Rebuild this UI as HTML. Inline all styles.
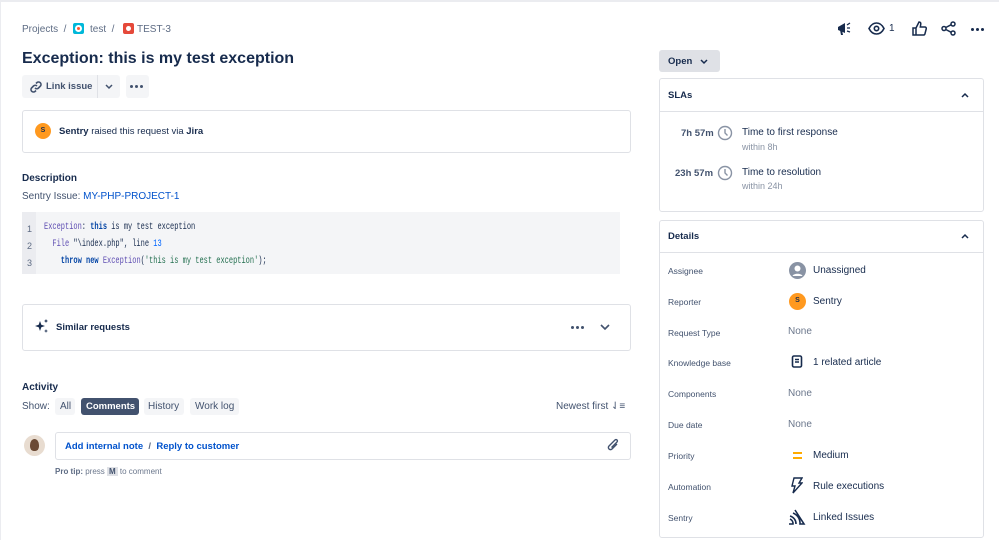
<!DOCTYPE html>
<html><head><meta charset="utf-8"><style>
*{box-sizing:border-box;margin:0;padding:0}
body{width:999px;height:540px;overflow:hidden;background:#fff;font-family:"Liberation Sans",sans-serif;color:#172b4d;position:relative}
.a{position:absolute;white-space:nowrap}
.s11{font-size:10px}.s10{font-size:9px}
.gray{color:#5e6c84}
.box{position:absolute;border:1px solid #dfe1e6;border-radius:3px;background:#fff}
.btn{position:absolute;background:#f4f5f7;border-radius:3px}
.blue{color:#0052cc}
.mono{font-family:"Liberation Mono",monospace;font-size:10px;transform:scaleX(0.70);transform-origin:0 0}
.lbl{position:absolute;left:668px;font-size:8.5px;color:#42526e}
.val{position:absolute;left:813px;font-size:10px;color:#172b4d}
.none{position:absolute;left:788px;font-size:10px;color:#6b778c}
.av{position:absolute;width:16px;height:16px;border-radius:50%;background:#ff991f;color:#172b4d;font-size:7px;text-align:center;line-height:16px;font-weight:bold}
.dots{position:absolute;display:flex;gap:2px}
.dots i{display:block;width:3px;height:3px;border-radius:50%;background:#42526e}
b{font-weight:bold}
</style></head><body>
<div class="a" style="left:0;top:0;width:999px;height:2px;background:#ebecf0"></div>
<div class="a" style="left:0;top:0;width:1px;height:540px;background:#ebecf0"></div>
<!-- breadcrumb -->
<div class="a s11 gray" style="left:22px;top:24px">Projects &nbsp;/</div>
<div class="a" style="left:73px;top:23px;width:11px;height:11px;background:#00b8d9;border-radius:2px"><div style="margin:2px;width:7px;height:7px;border:2px solid #fff;border-radius:50%;background:#ff5630"></div></div>
<div class="a s11 gray" style="left:90px;top:24px">test &nbsp;/</div>
<div class="a" style="left:123px;top:23px;width:11px;height:11px;background:#e5493a;border-radius:2px"><div style="margin:3px;width:5px;height:5px;background:#fff;border-radius:50%"></div></div>
<div class="a s11 gray" style="left:137px;top:24px">TEST-3</div>
<div class="a" style="left:22px;top:50px;font-size:16px;font-weight:bold">Exception: this is my test exception</div>
<!-- buttons -->
<div class="btn" style="left:22px;top:75px;width:98px;height:23px"></div>
<div class="a" style="left:97px;top:75px;width:1px;height:23px;background:#dfe1e6"></div>
<svg class="a" style="left:29px;top:80px" width="14" height="14" viewBox="0 0 14 14" fill="none" stroke="#42526e" stroke-width="1.6"><path d="M6 8a2.5 2.5 0 0 0 3.5 0l2-2a2.5 2.5 0 0 0-3.5-3.5L7 3.5M8 6a2.5 2.5 0 0 0-3.5 0l-2 2A2.5 2.5 0 0 0 6 11.5L7 10.5"/></svg>
<div class="a" style="left:46px;top:81px;font-size:9.5px;color:#42526e;font-weight:bold">Link issue</div>
<svg class="a" style="left:105px;top:84px" width="8" height="6"><path d="M1 1l3 3 3-3" stroke="#42526e" stroke-width="1.5" fill="none"/></svg>
<div class="btn" style="left:126px;top:75px;width:23px;height:23px"></div>
<div class="dots" style="left:130px;top:85px"><i></i><i></i><i></i></div>
<!-- sentry box -->
<div class="box" style="left:22px;top:110px;width:609px;height:43px"></div>
<div class="av" style="left:35px;top:123px">S</div>
<div class="a" style="left:59px;top:126px;font-size:9.5px"><b>Sentry</b> raised this request via <b>Jira</b></div>
<!-- description -->
<div class="a s11" style="left:22px;top:173px;font-weight:bold">Description</div>
<div class="a s11" style="left:22px;top:191px;color:#42526e">Sentry Issue: <span class="blue">MY-PHP-PROJECT-1</span></div>
<div class="a" style="left:22px;top:212px;width:598px;height:62px;background:#f4f5f7"></div>
<div class="a" style="left:22px;top:212px;width:14px;height:62px;background:#ebecf0"></div>
<div class="a" style="left:27px;top:221px;color:#5e6c84;line-height:17px;font-size:9px">1<br>2<br>3</div>
<div class="a mono" style="left:44px;top:219px;line-height:17px;color:#172b4d"><span style="color:#5e4db2">Exception</span>: <b style="color:#0747a6">this</b> is my test exception<br>&nbsp;&nbsp;<span style="color:#5e4db2">File</span> "\index.php", line <span style="color:#0065ff">13</span><br>&nbsp;&nbsp;&nbsp;&nbsp;<b style="color:#0747a6">throw new</b> <span style="color:#5e4db2">Exception</span>(<span style="color:#216e4e">'this is my test exception'</span>);</div>
<!-- similar -->
<div class="box" style="left:22px;top:304px;width:609px;height:47px"></div>
<svg class="a" style="left:34px;top:319px" width="15" height="15" viewBox="0 0 15 15" fill="#172b4d"><path d="M6 2l1.3 3.7L11 7l-3.7 1.3L6 12 4.7 8.3 1 7l3.7-1.3z"/><path d="M12 0l.6 1.4L14 2l-1.4.6L12 4l-.6-1.4L10 2l1.4-.6zM12 10l.5 1.5L14 12l-1.5.5L12 14l-.5-1.5L10 12l1.5-.5z"/></svg>
<div class="a" style="left:56px;top:322px;font-size:9.5px;font-weight:bold">Similar requests</div>
<div class="dots" style="left:571px;top:326px"><i></i><i></i><i></i></div>
<svg class="a" style="left:600px;top:324px" width="10" height="7"><path d="M1 1l4 4 4-4" stroke="#42526e" stroke-width="1.6" fill="none"/></svg>
<!-- activity -->
<div class="a s11" style="left:22px;top:382px;font-weight:bold">Activity</div>
<div class="a s11" style="left:22px;top:401px;color:#42526e">Show:</div>
<div class="btn" style="left:55px;top:398px;width:20px;height:17px"></div><div class="a s11" style="left:60px;top:401px;color:#42526e">All</div>
<div class="a" style="left:81px;top:398px;width:58px;height:17px;background:#42526e;border-radius:3px"></div><div class="a" style="left:86px;top:401px;font-size:9.5px;color:#fff;font-weight:bold">Comments</div>
<div class="btn" style="left:144px;top:398px;width:40px;height:17px"></div><div class="a s11" style="left:148px;top:401px;color:#42526e">History</div>
<div class="btn" style="left:190px;top:398px;width:49px;height:17px"></div><div class="a s11" style="left:195px;top:401px;color:#42526e">Work log</div>
<div class="a s11" style="left:556px;top:401px;color:#42526e">Newest first ⇃≡</div>
<div class="a" style="left:24px;top:435px;width:21px;height:21px;border-radius:50%;background:#e8dcd0;overflow:hidden"><div style="margin:4px 6px;width:9px;height:12px;background:#6b4a35;border-radius:50% 50% 40% 40%"></div></div>
<div class="box" style="left:55px;top:432px;width:576px;height:28px"></div>
<div class="a" style="left:65px;top:441px;font-size:9.5px;font-weight:bold"><span class="blue">Add internal note</span> &nbsp;<span class="gray">/</span>&nbsp; <span class="blue">Reply to customer</span></div>
<svg class="a" style="left:606px;top:438px" width="14" height="15" viewBox="0 0 14 15" fill="none" stroke="#42526e" stroke-width="1.4"><path d="M11 6l-5 5a2 2 0 0 1-3-3l6-6a1.3 1.3 0 0 1 2 2l-5.5 5.5"/></svg>
<div class="a" style="left:55px;top:467px;font-size:8px;color:#6b778c"><b style="color:#5e6c84">Pro tip:</b> press <span style="background:#dfe1e6;padding:0 2px;font-weight:bold;color:#42526e">M</span> to comment</div>
<!-- top right icons -->
<svg class="a" style="left:836px;top:21px" width="18" height="16" viewBox="0 0 18 16" fill="#172b4d"><path d="M2 6l7-4v10L2 9z"/><path d="M4 9l1 5h2l-1-5z"/><path d="M11 4l3-2M11 7h3M11 10l3 1" stroke="#172b4d" stroke-width="1.3"/></svg>
<svg class="a" style="left:868px;top:22px" width="17" height="13" viewBox="0 0 17 13" fill="none" stroke="#172b4d" stroke-width="1.6"><path d="M1 6.5C3 2.5 6 1 8.5 1s5.5 1.5 7.5 5.5c-2 4-5 5.5-7.5 5.5S3 10.5 1 6.5z"/><circle cx="8.5" cy="6.5" r="2.2"/></svg>
<div class="a s11" style="left:889px;top:23px">1</div>
<svg class="a" style="left:912px;top:21px" width="15" height="15" viewBox="0 0 15 15" fill="none" stroke="#172b4d" stroke-width="1.5"><path d="M1 7h3v7H1zM4 7l3-6c1.5 0 2 1 1.7 2.5L8.3 6H13c1 0 1.5 1 1.2 2l-1.3 5c-.2.7-.8 1-1.5 1H4"/></svg>
<svg class="a" style="left:941px;top:21px" width="15" height="15" viewBox="0 0 15 15" fill="none" stroke="#172b4d" stroke-width="1.5"><circle cx="12" cy="3" r="2"/><circle cx="3" cy="7.5" r="2"/><circle cx="12" cy="12" r="2"/><path d="M4.8 6.5l5.4-2.8M4.8 8.5l5.4 2.8"/></svg>
<div class="dots" style="left:971px;top:28px"><i style="background:#172b4d"></i><i style="background:#172b4d"></i><i style="background:#172b4d"></i></div>
<!-- open -->
<div class="a" style="left:659px;top:50px;width:61px;height:22px;background:#dfe1e6;border-radius:3px"></div>
<div class="a" style="left:668px;top:56px;font-size:9.5px;font-weight:bold">Open</div>
<svg class="a" style="left:700px;top:59px" width="8" height="6"><path d="M1 1l3 3 3-3" stroke="#172b4d" stroke-width="1.5" fill="none"/></svg>
<!-- SLAs -->
<div class="box" style="left:659px;top:78px;width:325px;height:134px"></div>
<div class="a" style="left:660px;top:111px;width:323px;height:1px;background:#dfe1e6"></div>
<div class="a" style="left:668px;top:90px;font-size:9.5px;font-weight:bold">SLAs</div>
<svg class="a" style="left:961px;top:92px" width="8" height="6"><path d="M1 5l3-3 3 3" stroke="#172b4d" stroke-width="1.5" fill="none"/></svg>
<div class="a" style="left:681px;top:128px;font-size:9.5px;font-weight:bold;color:#42526e">7h 57m</div>
<div class="a" style="left:675px;top:168px;font-size:9.5px;font-weight:bold;color:#42526e">23h 57m</div>
<svg class="a" style="left:717px;top:125px" width="16" height="16" viewBox="0 0 16 16" fill="none" stroke="#8993a4" stroke-width="1.4"><circle cx="8" cy="8" r="6.5"/><path d="M8 4v4l2.5 2.5"/></svg>
<svg class="a" style="left:717px;top:165px" width="16" height="16" viewBox="0 0 16 16" fill="none" stroke="#8993a4" stroke-width="1.4"><circle cx="8" cy="8" r="6.5"/><path d="M8 4v4l2.5 2.5"/></svg>
<div class="a s11" style="left:742px;top:127px">Time to first response</div>
<div class="a s10" style="left:742px;top:142px;color:#8993a4">within 8h</div>
<div class="a s11" style="left:742px;top:167px">Time to resolution</div>
<div class="a s10" style="left:742px;top:181px;color:#8993a4">within 24h</div>
<!-- Details -->
<div class="box" style="left:659px;top:220px;width:325px;height:318px"></div>
<div class="a" style="left:660px;top:252px;width:323px;height:1px;background:#dfe1e6"></div>
<div class="a" style="left:668px;top:231px;font-size:9.5px;font-weight:bold">Details</div>
<svg class="a" style="left:961px;top:233px" width="8" height="6"><path d="M1 5l3-3 3 3" stroke="#172b4d" stroke-width="1.5" fill="none"/></svg>
<div class="lbl" style="top:266px">Assignee</div>
<div class="lbl" style="top:297px">Reporter</div>
<div class="lbl" style="top:328px">Request Type</div>
<div class="lbl" style="top:358px">Knowledge base</div>
<div class="lbl" style="top:389px">Components</div>
<div class="lbl" style="top:420px">Due date</div>
<div class="lbl" style="top:451px">Priority</div>
<div class="lbl" style="top:482px">Automation</div>
<div class="lbl" style="top:513px">Sentry</div>
<svg class="a" style="left:789px;top:262px" width="17" height="17" viewBox="0 0 17 17"><circle cx="8.5" cy="8.5" r="8.5" fill="#8993a4"/><circle cx="8.5" cy="6.5" r="3" fill="#fff"/><path d="M3.5 14c1-3 9-3 10 0" fill="#fff"/></svg>
<div class="val" style="top:265px">Unassigned</div>
<div class="av" style="left:789px;top:293px;width:17px;height:17px">S</div>
<div class="val" style="top:296px">Sentry</div>
<div class="none" style="top:326px">None</div>
<svg class="a" style="left:791px;top:355px" width="12" height="14" viewBox="0 0 12 14" fill="none" stroke="#172b4d" stroke-width="1.6"><rect x="1.5" y="1" width="9" height="11" rx="1.5"/><path d="M4 4.5h4M4 7h4"/></svg>
<div class="val" style="top:357px">1 related article</div>
<div class="none" style="top:388px">None</div>
<div class="none" style="top:419px">None</div>
<div class="a" style="left:793px;top:452px;width:9px;height:2px;background:#ffab00"></div>
<div class="a" style="left:793px;top:457px;width:9px;height:2px;background:#ffab00"></div>
<div class="val" style="top:450px">Medium</div>
<svg class="a" style="left:791px;top:477px" width="12" height="17" viewBox="0 0 12 17" fill="none" stroke="#172b4d" stroke-width="1.4"><path d="M3 1h8L8 6h3L2 16l2-7H1z"/></svg>
<div class="val" style="top:481px">Rule executions</div>
<svg class="a" style="left:788px;top:509px" width="18" height="16" viewBox="0 0 18 16" fill="none" stroke="#172b4d" stroke-width="1.6"><path d="M1 15h4a5 5 0 0 0-3-5M2 7a8 8 0 0 1 6 8M7 1l9 14H12A11 11 0 0 0 5 4"/></svg>
<div class="val" style="top:512px">Linked Issues</div>
</body></html>
